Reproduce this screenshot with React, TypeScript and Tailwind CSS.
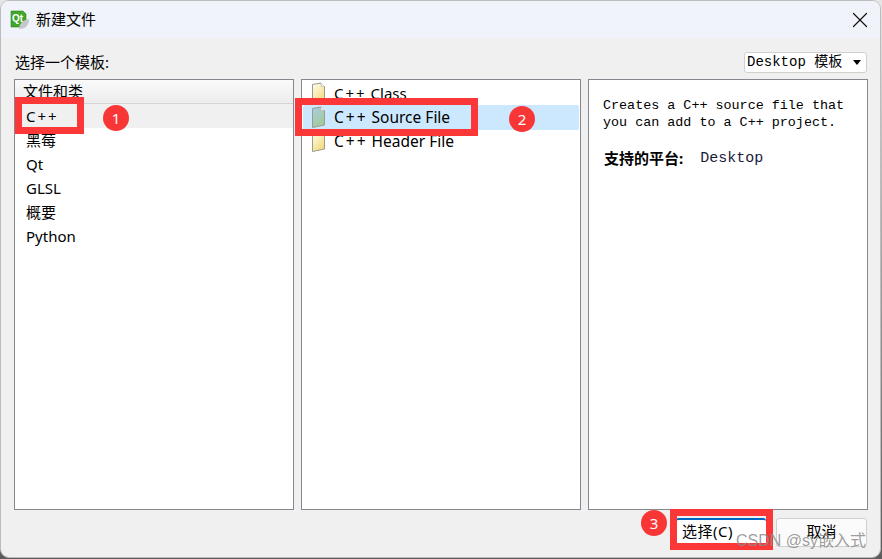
import { X } from 'lucide-react';

const cjk = "font-['Noto_Sans','Noto_Sans_CJK_SC',sans-serif]";
const mono = "font-['Liberation_Mono','Noto_Sans_CJK_SC',monospace]";

const categories = ['黑莓', 'Qt', 'GLSL', '概要', 'Python'];

function QtLogo() {
  return (
    <svg width="20" height="20" viewBox="0 0 20 20" className="shrink-0">
      <path d="M1 1h12l3 3v10l-3 3H1z" fill="#41a62a" stroke="#2f8a1e" strokeWidth="0.6" />
      <text x="2" y="12" fontSize="10" fontWeight="700" fill="#fff" fontFamily="Liberation Sans">Qt</text>
      <path d="M9 19c0-5 4-9 10-10 0 6-3 10-10 10z" fill="#c4c8cc" />
    </svg>
  );
}

function FileIcon({ selected }: { selected?: boolean }) {
  const id = selected ? 'fileBlue' : 'fileYellow';
  return (
    <svg width="15" height="23" viewBox="0 0 15 23" className="shrink-0">
      <defs>
        <linearGradient id={id} x1="0" y1="0" x2="0.6" y2="1">
          <stop offset="0" stopColor={selected ? '#a9cfe6' : '#fffef4'} />
          <stop offset="1" stopColor={selected ? '#a3c898' : '#f2dc80'} />
        </linearGradient>
      </defs>
      <path d="M1.5 2.5L10 1l3.5 3.5V19L1.5 21.5z" fill={`url(#${id})`} stroke="#9b9b90" strokeWidth="1" strokeLinejoin="round" />
      <path d="M10 1v3.5h3.5" fill="#fff" stroke="#b5b5aa" strokeWidth="0.7" />
    </svg>
  );
}

function Cpp() {
  return <span className="tracking-[2px]">C++</span>;
}

function Badge({ n, className }: { n: number; className: string }) {
  return (
    <div className={`absolute flex h-[26px] w-[26px] items-center justify-center rounded-full bg-[#f93636] text-[15px] text-white ${className}`}>
      {n}
    </div>
  );
}

function RedBox({ className }: { className: string }) {
  return <div className={`pointer-events-none absolute border-[7px] border-[#fb3737] ${className}`} />;
}

export default function App() {
  return (
    <div className="h-[559px] w-[882px] overflow-hidden bg-gradient-to-b from-[#e6e6e6] to-[#5c5c5c]">
      <div className={`relative flex h-[558px] w-[881px] flex-col overflow-hidden rounded-[9px] border border-[#bcbcbc] bg-[#f0f0f0] text-black ${cjk}`}>
        {/* title bar */}
        <div className="flex h-[37px] shrink-0 items-center bg-[#f0f3f9] pl-[9px] pr-[7px]">
          <QtLogo />
          <span className="ml-[6px] text-[15px]">新建文件</span>
          <X size={26} strokeWidth={1.1} className="ml-auto text-[#111]" />
        </div>

        <div className="flex min-h-0 flex-1 flex-col pl-[13px] pr-[12px]">
          <div className="flex h-[41px] shrink-0 items-center justify-between pt-[7px]">
            <span className="pl-px text-[15px]">选择一个模板:</span>
            <div className={`mr-px flex h-[21px] w-[123px] items-center justify-between rounded-[3px] border border-[#d0d0d0] bg-white pl-[2px] pr-[5px] text-[14px] ${mono}`}>
              <span>Desktop 模板</span>
              <span className="h-0 w-0 border-x-[4px] border-t-[5px] border-x-transparent border-t-black" />
            </div>
          </div>

          <div className="flex h-[431px] shrink-0 gap-[7px]">
            {/* categories */}
            <div className="w-[280px] shrink-0 border border-[#86868e] bg-white">
              <div className="flex h-[24px] items-center border-b border-[#d5d5d5] bg-gradient-to-b from-[#fafafa] to-[#ececec] pl-[8px] text-[15px]">文件和类</div>
              <div className="flex h-[24px] items-center bg-[#f0f0f0] pl-[11px] text-[15px]"><Cpp /></div>
              {categories.map((c) => (
                <div key={c} className="flex h-[24px] items-center pl-[11px] text-[15px]">{c}</div>
              ))}
            </div>

            {/* templates */}
            <div className="w-[280px] shrink-0 border border-[#86868e] bg-white px-px pt-[2px]">
              <div className="flex h-[23px] items-center gap-[8px] pl-[8px] text-[15px]"><FileIcon /><span className="whitespace-pre"><Cpp /> Class</span></div>
              <div className="flex h-[25px] items-center gap-[8px] rounded-[2px] bg-[#cce8ff] pl-[8px] text-[15.5px]"><FileIcon selected /><span className="whitespace-pre"><Cpp /> Source File</span></div>
              <div className="flex h-[23px] items-center gap-[8px] pl-[8px] text-[15.5px]"><FileIcon /><span className="whitespace-pre"><Cpp /> Header File</span></div>
            </div>

            {/* description */}
            <div className="w-[280px] shrink-0 border border-[#86868e] bg-white pl-[14px] pt-[17px]">
              <p className={`text-[13.4px] leading-[17px] ${mono}`}>
                Creates a C++ source file that<br />you can add to a C++ project.
              </p>
              <p className="mt-[16px] flex items-center pl-px text-[15px] font-bold leading-[18px]">
                支持的平台:
                <span className={`ml-[17px] pt-[3px] text-[15px] font-normal text-[#1a1a3a] ${mono}`}>Desktop</span>
              </p>
            </div>
          </div>

          <div className="mr-px flex flex-1 items-start justify-end gap-[10px] pt-[8px]">
            <div className="flex h-[29px] w-[90px] items-center rounded-[3px] border-t-2 border-[#0067c0] bg-white pb-[5px] pl-[6px] text-[15px] tracking-[0.5px]">选择(C)</div>
            <div className="flex h-[29px] w-[91px] items-center justify-center rounded-[3px] border border-[#d0d0d0] bg-[#fbfbfb] pb-[3px] text-[15px]">取消</div>
          </div>
        </div>

        {/* annotations */}
        <RedBox className="left-[14px] top-[96px] h-[37px] w-[69px]" />
        <RedBox className="left-[294px] top-[97px] h-[38px] w-[183px]" />
        <RedBox className="left-[669px] top-[508px] h-[41px] w-[103px]" />
        <Badge n={1} className="left-[102px] top-[104px]" />
        <Badge n={2} className="left-[508px] top-[105px]" />
        <Badge n={3} className="left-[640px] top-[509px]" />

        {/* watermark */}
        <div className="absolute left-[735px] top-[528px] font-['Liberation_Sans','Noto_Sans_CJK_SC',sans-serif] text-[16px] text-[#8c8c8c]/85">CSDN @sy嵌入式</div>
      </div>
    </div>
  );
}
